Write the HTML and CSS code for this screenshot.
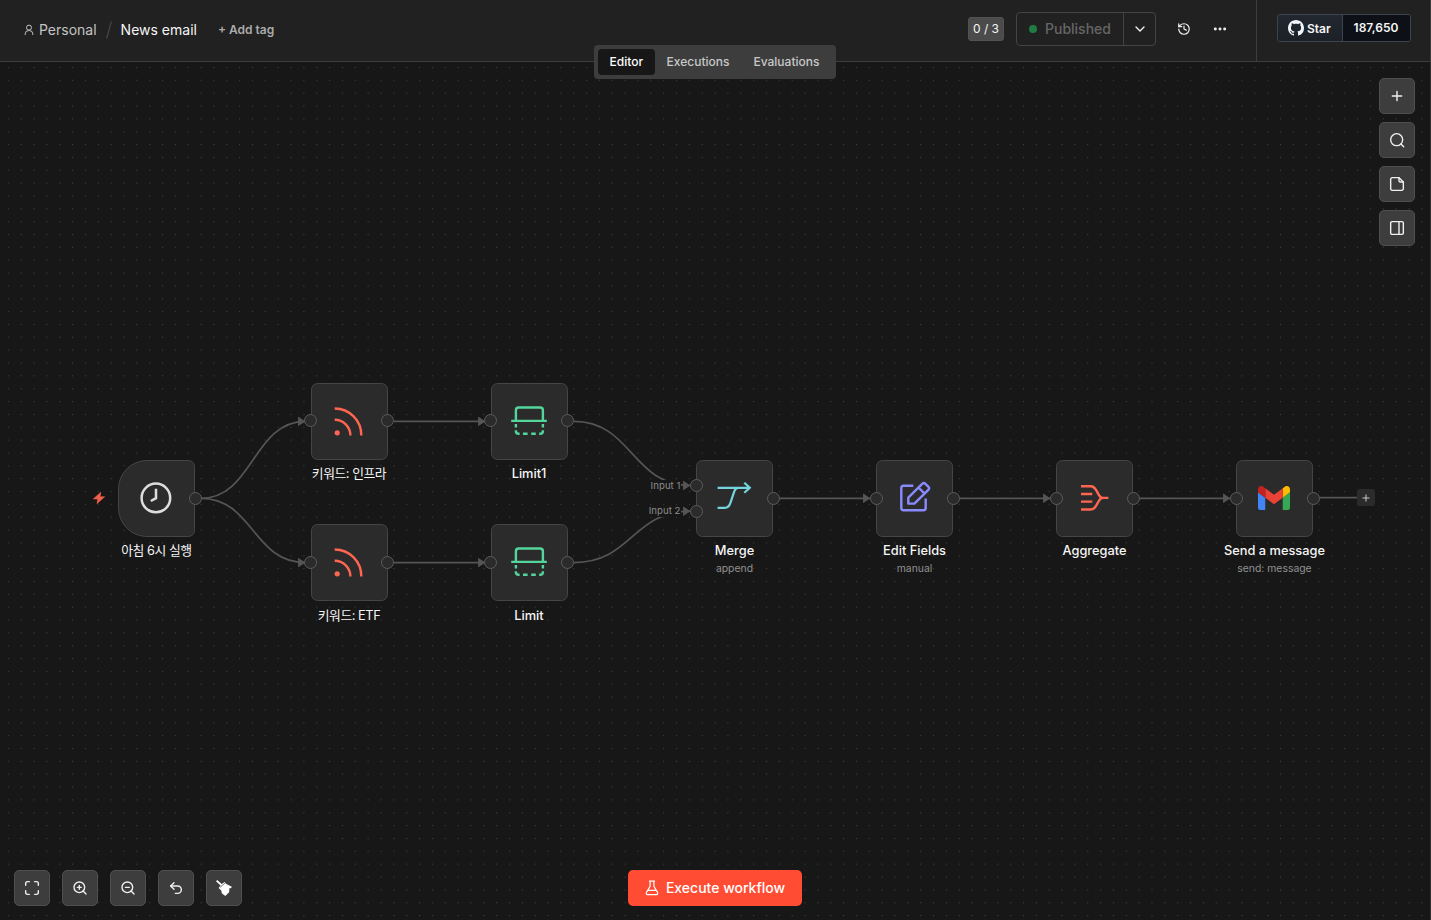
FILE: index.html
```html
<!DOCTYPE html>
<html lang="en">
<head>
    <meta charset="UTF-8">
    <meta name="viewport" content="width=device-width, initial-scale=1.0">
    <title>News email</title>
    <link rel="stylesheet" href="styles.css">
</head>
<body>
    <header class="header">
        <div class="breadcrumb">
            <svg class="user-icon" viewBox="0 0 10 12"><circle cx="5" cy="3.6" r="2.5"/><path d="M1.2 11V9.8a3.3 3.3 0 0 1 3.3-3.2h1a3.3 3.3 0 0 1 3.3 3.2V11"/></svg>
            <span class="project">Personal</span>
            <svg class="slash" viewBox="0 0 6 18"><path d="M5.3.5.7 17.5"/></svg>
            <span class="workflow-name">News email</span>
            <span class="add-tag">+ Add tag</span>
        </div>
        <div class="header-actions">
            <span class="counter">0 / 3</span>
            <div class="publish">
                <div class="publish-status"><span class="dot"></span>Published</div>
                <div class="publish-menu"><svg class="icon" viewBox="0 0 24 24"><path d="m6 9 6 6 6-6"/></svg></div>
            </div>
            <svg class="icon history" viewBox="0 0 24 24"><path d="M3 12a9 9 0 1 0 9-9 9.75 9.75 0 0 0-6.74 2.74L3 8"/><path d="M3 3v5h5"/><path d="M12 7v5l4 2"/></svg>
            <svg class="icon more" viewBox="0 0 24 24"><circle cx="4" cy="12" r="1.5"/><circle cx="12" cy="12" r="1.5"/><circle cx="20" cy="12" r="1.5"/></svg>
        </div>
        <div class="github">
            <div class="github-button">
                <span class="github-star">
                    <svg viewBox="0 0 16 16"><path d="M8 0C3.58 0 0 3.58 0 8c0 3.54 2.29 6.53 5.47 7.59.4.07.55-.17.55-.38 0-.19-.01-.82-.01-1.49-2.01.37-2.53-.49-2.69-.94-.09-.23-.48-.94-.82-1.13-.28-.15-.68-.52-.01-.53.63-.01 1.08.58 1.23.82.72 1.21 1.87.87 2.33.66.07-.52.28-.87.51-1.07-1.78-.2-3.64-.89-3.64-3.95 0-.87.31-1.59.82-2.15-.08-.2-.36-1.02.08-2.12 0 0 .67-.21 2.2.82.64-.18 1.32-.27 2-.27s1.36.09 2 .27c1.53-1.04 2.2-.82 2.2-.82.44 1.1.16 1.92.08 2.12.51.56.82 1.27.82 2.15 0 3.07-1.87 3.75-3.65 3.95.29.25.54.73.54 1.48 0 1.07-.01 1.93-.01 2.2 0 .21.15.46.55.38A8.01 8.01 0 0 0 16 8c0-4.42-3.58-8-8-8z"/></svg>
                    Star
                </span>
                <span class="github-count">187,650</span>
            </div>
        </div>
        <nav class="tabs">
            <a class="tab active">Editor</a>
            <a class="tab">Executions</a>
            <a class="tab">Evaluations</a>
        </nav>
    </header>

    <main class="canvas">
        <!-- dots and connections -->
        <svg class="edges" viewBox="0 62 1431 858">
            <defs>
                <pattern id="dots" x="7.8" y="66.9" width="12.85" height="12.85" patternUnits="userSpaceOnUse">
                    <circle cx="0.6" cy="0.6" r="0.6"/>
                </pattern>
                <marker id="arrow" viewBox="0 0 8 10" refX="8" refY="5" markerWidth="8" markerHeight="10" markerUnits="userSpaceOnUse">
                    <path d="M.8.8 7.2 5 .8 9.2z"/>
                </marker>
            </defs>
            <rect y="62" width="1431" height="858" fill="url(#dots)"/>
            <path class="edge arrow" d="M201 498.3C253 498.3 253 421.4 305.5 421.4"/>
            <path class="edge arrow" d="M201 498.3C253 498.3 253 562.6 305.5 562.6"/>
            <path class="edge arrow" d="M394 421.4H485.5"/>
            <path class="edge arrow" d="M394 562.6H485.5"/>
            <path class="edge arrow" d="M574 421.4C632 421.4 632 485.5 690.5 485.5"/>
            <path class="edge arrow" d="M574 562.6C632 562.6 632 511.2 690.5 511.2"/>
            <path class="edge arrow" d="M779.5 498.3H870.5"/>
            <path class="edge arrow" d="M959.5 498.3H1050.5"/>
            <path class="edge arrow" d="M1139.5 498.3H1230.5"/>
            <path class="edge" d="M1319.5 497.6H1357"/>
        </svg>

        <svg class="trigger-bolt" viewBox="0 0 12 12"><path d="M7.8.3.3 6.9h4.5L4 11.7l7.6-6.9H7.1z"/></svg>

        <div class="node trigger" style="left: 118px; top: 398px">
            <svg class="node-icon clock" viewBox="0 0 40 40"><circle cx="19.9" cy="19.9" r="14.3"/><path d="M20 10.8v9.400l-5.200 2.800"/></svg>
            <i class="handle out"></i>
            <div class="label"><span class="ko">아침 6시 실행</span></div>
        </div>
        <div class="node" style="left: 310.5px; top: 320.5px">
            <svg class="node-icon rss" viewBox="0 0 40 40"><circle cx="8.2" cy="31.8" r="2.6"/><path d="M5.7 7.5a26.600 26.600 0 0 1 26.600 26.900M5.700 18.800a15.700 15.700 0 0 1 15.700 15.600"/></svg>
            <i class="handle in"></i><i class="handle out"></i>
            <div class="label"><span class="ko">키워드: 인프라</span></div>
        </div>
        <div class="node" style="left: 310.5px; top: 462px">
            <svg class="node-icon rss" viewBox="0 0 40 40"><circle cx="8.2" cy="31.8" r="2.6"/><path d="M5.7 7.5a26.600 26.600 0 0 1 26.600 26.900M5.700 18.800a15.700 15.700 0 0 1 15.700 15.600"/></svg>
            <i class="handle in"></i><i class="handle out"></i>
            <div class="label low"><span class="ko">키워드: ETF</span></div>
        </div>
        <div class="node" style="left: 490.5px; top: 320.5px">
            <svg class="node-icon limit" viewBox="0 0 40 40"><path d="M6.9 20V9.200q0-2.700 2.700-2.700h21.600q2.700 0 2.700 2.700V20M2.200 19.900h35.600"/><path d="M6.900 23v3.500M6.900 29.200v.9q0 2.700 2.700 2.700h1M14 32.800h4.600M22.200 32.800h4.600M30.200 32.800h1q2.700 0 2.700-2.700v-.9M33.900 26.500V23"/></svg>
            <i class="handle in"></i><i class="handle out"></i>
            <div class="label"><span>Limit1</span></div>
        </div>
        <div class="node" style="left: 490.5px; top: 462px">
            <svg class="node-icon limit" viewBox="0 0 40 40"><path d="M6.9 20V9.200q0-2.700 2.700-2.700h21.600q2.700 0 2.700 2.700V20M2.200 19.900h35.600"/><path d="M6.900 23v3.500M6.900 29.200v.9q0 2.700 2.700 2.700h1M14 32.800h4.600M22.200 32.800h4.600M30.200 32.800h1q2.700 0 2.700-2.700v-.9M33.900 26.500V23"/></svg>
            <i class="handle in"></i><i class="handle out"></i>
            <div class="label low"><span>Limit</span></div>
        </div>
        <div class="node" style="left: 696px; top: 398px">
            <svg class="node-icon merge" viewBox="0 0 40 40"><path d="M3.6 9.8h32M30.3 4.8l5.5 5-5.5 5M3.6 29.8h7.2c3.4 0 4.7-2 5.7-5.2l3.5-10.4c.8-2.6 1.7-4.4 4.2-4.4"/></svg>
            <i class="handle in first"></i><i class="handle in second"></i><i class="handle out"></i>
            <span class="input-label first">Input 1</span>
            <span class="input-label second">Input 2</span>
            <div class="label"><span>Merge</span><small>append</small></div>
        </div>
        <div class="node" style="left: 876px; top: 398px">
            <svg class="node-icon edit" viewBox="0 0 40 40"><path d="M19.3 7.7H9.5q-2.2 0-2.2 2.2V30q0 2.2 2.2 2.2h20q2.2 0 2.2-2.2v-9.5"/><path d="M14.3 19.7 28.2 5.8q1.6-1.6 3.2 0l2.9 2.9q1.6 1.6 0 3.2L20.4 25.6h-6.1zM24.5 9.500l6.100 6.100"/></svg>
            <i class="handle in"></i><i class="handle out"></i>
            <div class="label"><span>Edit Fields</span><small>manual</small></div>
        </div>
        <div class="node" style="left: 1056px; top: 398px">
            <svg class="node-icon aggregate" viewBox="0 0 40 40"><path d="M7 8.2h9.5c3.4 0 4.3 1.6 5.8 4.2l2.5 4.4c1 1.8 1.8 3.1 4 3.1h5.6M7 31.5h9.500c3.400 0 4.300-1.600 5.800-4.200l2.500-4.300c1-1.800 1.800-3.100 4-3.100M7 16h11.300M7 23.600h11.300"/></svg>
            <i class="handle in"></i><i class="handle out"></i>
            <div class="label"><span>Aggregate</span></div>
        </div>
        <div class="node" style="left: 1236px; top: 398px">
            <svg class="gmail" viewBox="52 42 88 66"><path fill="#4285f4" d="M58 108h14V74L52 59v43c0 3.320 2.690 6 6 6"/><path fill="#34a853" d="M120 108h14c3.320 0 6-2.690 6-6V59l-20 15"/><path fill="#fbbc04" d="M120 48v26l20-15v-8c0-7.420-8.470-11.650-14.400-7.200"/><path fill="#ea4335" d="M72 74V48l24 18 24-18v26L96 92"/><path fill="#c5221f" d="M52 51v8l20 15V48l-5.600-4.200c-5.940-4.450-14.400-.220-14.400 7.200"/></svg>
            <i class="handle in"></i><i class="handle out"></i>
            <div class="label"><span>Send a message</span><small>send: message</small></div>
        </div>
        <div class="add-node"><svg viewBox="0 0 8 8"><path d="M4 .5v7M.5 4h7"/></svg></div>

        <div class="side-tools">
            <button class="tool"><svg class="icon" viewBox="0 0 24 24"><path d="M5 12h14M12 5v14"/></svg></button>
            <button class="tool"><svg class="icon" viewBox="0 0 24 24"><circle cx="11.500" cy="11.500" r="9"/><path d="m22 22-4-4"/></svg></button>
            <button class="tool"><svg class="icon" viewBox="0 0 24 24"><path d="M15 2.500H5A2.500 2.500 0 0 0 2.500 5v14A2.500 2.500 0 0 0 5 21.500h14a2.500 2.500 0 0 0 2.500-2.500V9z"/><path d="M15 2.500V7a2 2 0 0 0 2 2h4.500"/></svg></button>
            <button class="tool"><svg class="icon" viewBox="0 0 24 24"><rect x="2.500" y="2.500" width="19" height="19" rx="2"/><path d="M15 3v18"/></svg></button>
        </div>

        <div class="view-tools">
            <button class="tool"><svg class="icon" viewBox="0 0 24 24"><path d="M8 2.500H5A2.500 2.500 0 0 0 2.500 5v3M21.500 8V5A2.500 2.500 0 0 0 19 2.500h-3M2.500 16v3A2.500 2.500 0 0 0 5 21.500h3M16 21.500h3a2.500 2.500 0 0 0 2.500-2.500v-3"/></svg></button>
            <button class="tool"><svg class="icon" viewBox="0 0 24 24"><circle cx="11" cy="11" r="8"/><path d="m21 21-4.350-4.350M11 8v6M8 11h6"/></svg></button>
            <button class="tool"><svg class="icon" viewBox="0 0 24 24"><circle cx="11" cy="11" r="8"/><path d="m21 21-4.350-4.350M8 11h6"/></svg></button>
            <button class="tool"><svg class="icon" viewBox="0 0 24 24"><path d="M9 14 4 9l5-5"/><path d="M4 9h10.500a5.500 5.500 0 0 1 0 11H11"/></svg></button>
            <button class="tool"><svg class="broom" viewBox="0 0 16 16"><path d="M0 1.200 1.200.1 5.700 4 8.600 1.900 10.300 4l5.500 2.800-.7 1.400-1.600-.2-.4 4.200-3.800 3.700-3.500-2.600-.5-2.900L2.600 8l2-2.500z"/><path class="cut" d="m4 7.400 5.400-4.700"/></svg></button>
        </div>

        <button class="execute">
            <svg viewBox="0 0 14 16"><path d="M4 1.200h6M5.100 1.200v5L1.500 12.400q-1 2.200 1.200 2.200h8.600q2.200 0 1.200-2.200L8.900 6.200v-5M3.200 10.300h7.600"/></svg>
            <span>Execute workflow</span>
        </button>
    </main>
</body>
</html>
```

FILE: styles.css
```css
* {
    box-sizing: border-box;
}
body {
    margin: 0;
    height: 100vh;
    display: flex;
    flex-direction: column;
    overflow: hidden;
    background-color: #171717;
    color: #f5f5f5;
    font-family: Inter, "Noto Sans CJK KR", sans-serif;
    font-size: 14px;
}
button {
    padding: 0;
    font-family: inherit;
    cursor: pointer;
}
.icon {
    width: 16px;
    height: 16px;
    fill: none;
    stroke: #f0f0f0;
    stroke-width: 2.1;
    stroke-linecap: round;
    stroke-linejoin: round;
}

/* header */
.header {
    position: relative;
    display: flex;
    flex: none;
    height: 62px;
    background-color: #212121;
    border-bottom: 1px solid #3d3d3d;
    z-index: 2;
}
.breadcrumb {
    display: flex;
    align-items: center;
    flex: 1;
    padding: 0 0 2px 24px;
}
.user-icon {
    width: 10px;
    height: 12px;
    margin-right: 5px;
    fill: none;
    stroke: #c4c4c4;
}
.project {
    color: #c4c4c4;
}
.slash {
    width: 6px;
    height: 18px;
    margin: 0 9px;
    fill: none;
    stroke: #444;
    stroke-width: 1.3;
}
.add-tag {
    margin-left: 21px;
    color: #ababab;
    font-size: 12px;
    font-weight: 600;
}
.header-actions {
    display: flex;
    align-items: center;
    padding: 0 29px 4px 0;
}
.counter {
    width: 36px;
    background-color: #4b4b4b;
    border: 1px solid #525252;
    border-radius: 3px;
    font-size: 12px;
    line-height: 22px;
    text-align: center;
    white-space: nowrap;
}
.publish {
    display: flex;
    width: 140px;
    height: 34px;
    margin: 0 20px 0 12px;
    border: 1px solid #444;
    border-radius: 4px;
}
.publish-status {
    display: flex;
    align-items: center;
    width: 107px;
    padding-left: 12px;
    border-right: 1px solid #444;
    color: #666;
    font-weight: 500;
}
.dot {
    width: 8px;
    height: 8px;
    margin-right: 8px;
    border-radius: 50%;
    background-color: #1f7d43;
}
.publish-menu {
    display: flex;
    flex: 1;
    align-items: center;
    justify-content: center;
}
.history {
    width: 14px;
    height: 14px;
    margin: 0 22px 0 1px;
}
.more {
    width: 14px;
    height: 14px;
    fill: #f0f0f0;
}
.github {
    width: 175px;
    padding: 14px 0 0 20px;
    border-left: 1px solid #3d3d3d;
    border-right: 1px solid #3d3d3d;
}
.github-button {
    display: flex;
    width: 134px;
    height: 28px;
    border: 1px solid #3d444d;
    border-radius: 3px;
    overflow: hidden;
    font-size: 12px;
    font-weight: 600;
}
.github-star {
    display: flex;
    align-items: center;
    gap: 3px;
    width: 65px;
    padding-left: 10px;
    background: linear-gradient(#212830, #1c2128);
    border-right: 1px solid #3d444d;
}
.github-star svg {
    width: 16px;
    height: 16px;
    fill: #f0f6fc;
}
.github-count {
    flex: 1;
    padding-right: 1px;
    background-color: #0d1117;
    line-height: 26px;
    text-align: center;
}
.tabs {
    position: absolute;
    top: 45px;
    left: 594px;
    display: flex;
    width: 242px;
    height: 34px;
    padding: 4px;
    border-radius: 4px;
    background-color: #3d3d3d;
}
.tab {
    padding: 0 12px;
    border-radius: 4px;
    color: #c8c8c8;
    font-size: 12px;
    font-weight: 500;
    line-height: 26px;
}
.tab.active {
    padding: 0 11.5px;
    background-color: #171717;
    color: #fff;
}

/* canvas */
.canvas {
    position: relative;
    flex: 1;
    border-right: 1px solid #303030;
}
.edges {
    position: absolute;
    top: 0;
    left: 0;
    width: 1431px;
    height: 858px;
}
.edges pattern circle {
    fill: #484848;
}
.edge {
    fill: none;
    stroke: #555;
    stroke-width: 1.7;
}
.edge.arrow {
    marker-end: url(#arrow);
}
.edges marker path {
    fill: #555;
    stroke: #555;
    stroke-linejoin: round;
}
.trigger-bolt {
    position: absolute;
    left: 92.5px;
    top: 429.5px;
    width: 12px;
    height: 12px;
    fill: #f0604d;
    stroke: #f0604d;
    stroke-width: 0.6;
}

.node {
    position: absolute;
    display: flex;
    align-items: center;
    justify-content: center;
    width: 77px;
    height: 77px;
    border: 1px solid #454545;
    border-radius: 6.5px;
    background-color: #2b2b2b;
}
.node.trigger {
    border-radius: 29px 6.5px 6.5px 29px;
}
.node-icon {
    width: 40px;
    height: 40px;
    margin: -1px 0 0 -1px;
    fill: none;
    stroke-width: 2.4;
}
.clock {
    stroke: #dedede;
    stroke-width: 2.5;
}
.rss {
    stroke: #ff6652;
}
.rss circle {
    fill: #ff6652;
    stroke: none;
}
.limit {
    stroke: #54d59c;
}
.merge {
    stroke: #74d5e0;
    stroke-width: 2.2;
}
.edit {
    stroke: #8a8aff;
    stroke-linejoin: round;
}
.aggregate {
    stroke: #ff6652;
}
.gmail {
    width: 32px;
    height: 24px;
    margin: -1px 0 0 -1px;
}
.handle {
    position: absolute;
    top: 30.5px;
    width: 13px;
    height: 13px;
    border: 1px solid #5c5c5c;
    border-radius: 50%;
    background-color: #2b2b2b;
}
.handle.in {
    left: -7.5px;
}
.handle.out {
    right: -7.5px;
}
.handle.first {
    top: 18px;
}
.handle.second {
    top: 44px;
}
.input-label {
    position: absolute;
    right: 91.5px;
    background-color: #171717;
    color: #8d8d8d;
    font-size: 9.6px;
    letter-spacing: 0.05px;
    line-height: 12px;
    white-space: nowrap;
}
.input-label.first {
    top: 19px;
}
.input-label.second {
    top: 44px;
}
.label {
    position: absolute;
    top: 81px;
    display: flex;
    flex-direction: column;
    align-items: center;
    white-space: nowrap;
    font-size: 12.8px;
    font-weight: 500;
    line-height: 17px;
}
.label.low {
    top: 82px;
}
.label .ko {
    font-weight: 400;
    letter-spacing: -0.45px;
}
.label small {
    margin-top: 2px;
    color: #919191;
    font-size: 10.4px;
    font-weight: 400;
    line-height: 16px;
}
.add-node {
    position: absolute;
    left: 1357px;
    top: 427px;
    display: flex;
    align-items: center;
    justify-content: center;
    width: 18px;
    height: 17px;
    border-radius: 3px;
    background-color: #2b2b2b;
}
.add-node svg {
    width: 8px;
    height: 8px;
    stroke: #c8c8c8;
}

/* buttons over the canvas */
.side-tools {
    position: absolute;
    top: 16px;
    right: 15px;
    display: flex;
    flex-direction: column;
    gap: 8px;
}
.view-tools {
    position: absolute;
    left: 14px;
    bottom: 14px;
    display: flex;
    gap: 12px;
}
.tool {
    display: flex;
    align-items: center;
    justify-content: center;
    width: 36px;
    height: 36px;
    border: 1px solid #4f4f4f;
    border-radius: 5px;
    background-color: #3d3d3d;
}
.broom {
    width: 16px;
    height: 16px;
    fill: #fff;
}
.broom .cut {
    fill: none;
    stroke: #3d3d3d;
    stroke-width: 0.7;
}
.execute {
    position: absolute;
    left: 628px;
    bottom: 14px;
    display: flex;
    align-items: center;
    justify-content: center;
    gap: 7px;
    width: 174px;
    height: 36px;
    border: none;
    border-radius: 5px;
    background-color: #ff4c33;
    color: #fff;
    font-size: 14px;
    font-weight: 500;
}
.execute span {
    padding-bottom: 1px;
}
.execute svg {
    width: 14px;
    height: 16px;
    fill: none;
    stroke: #fff;
    stroke-width: 1.2;
    stroke-linejoin: round;
}
```
